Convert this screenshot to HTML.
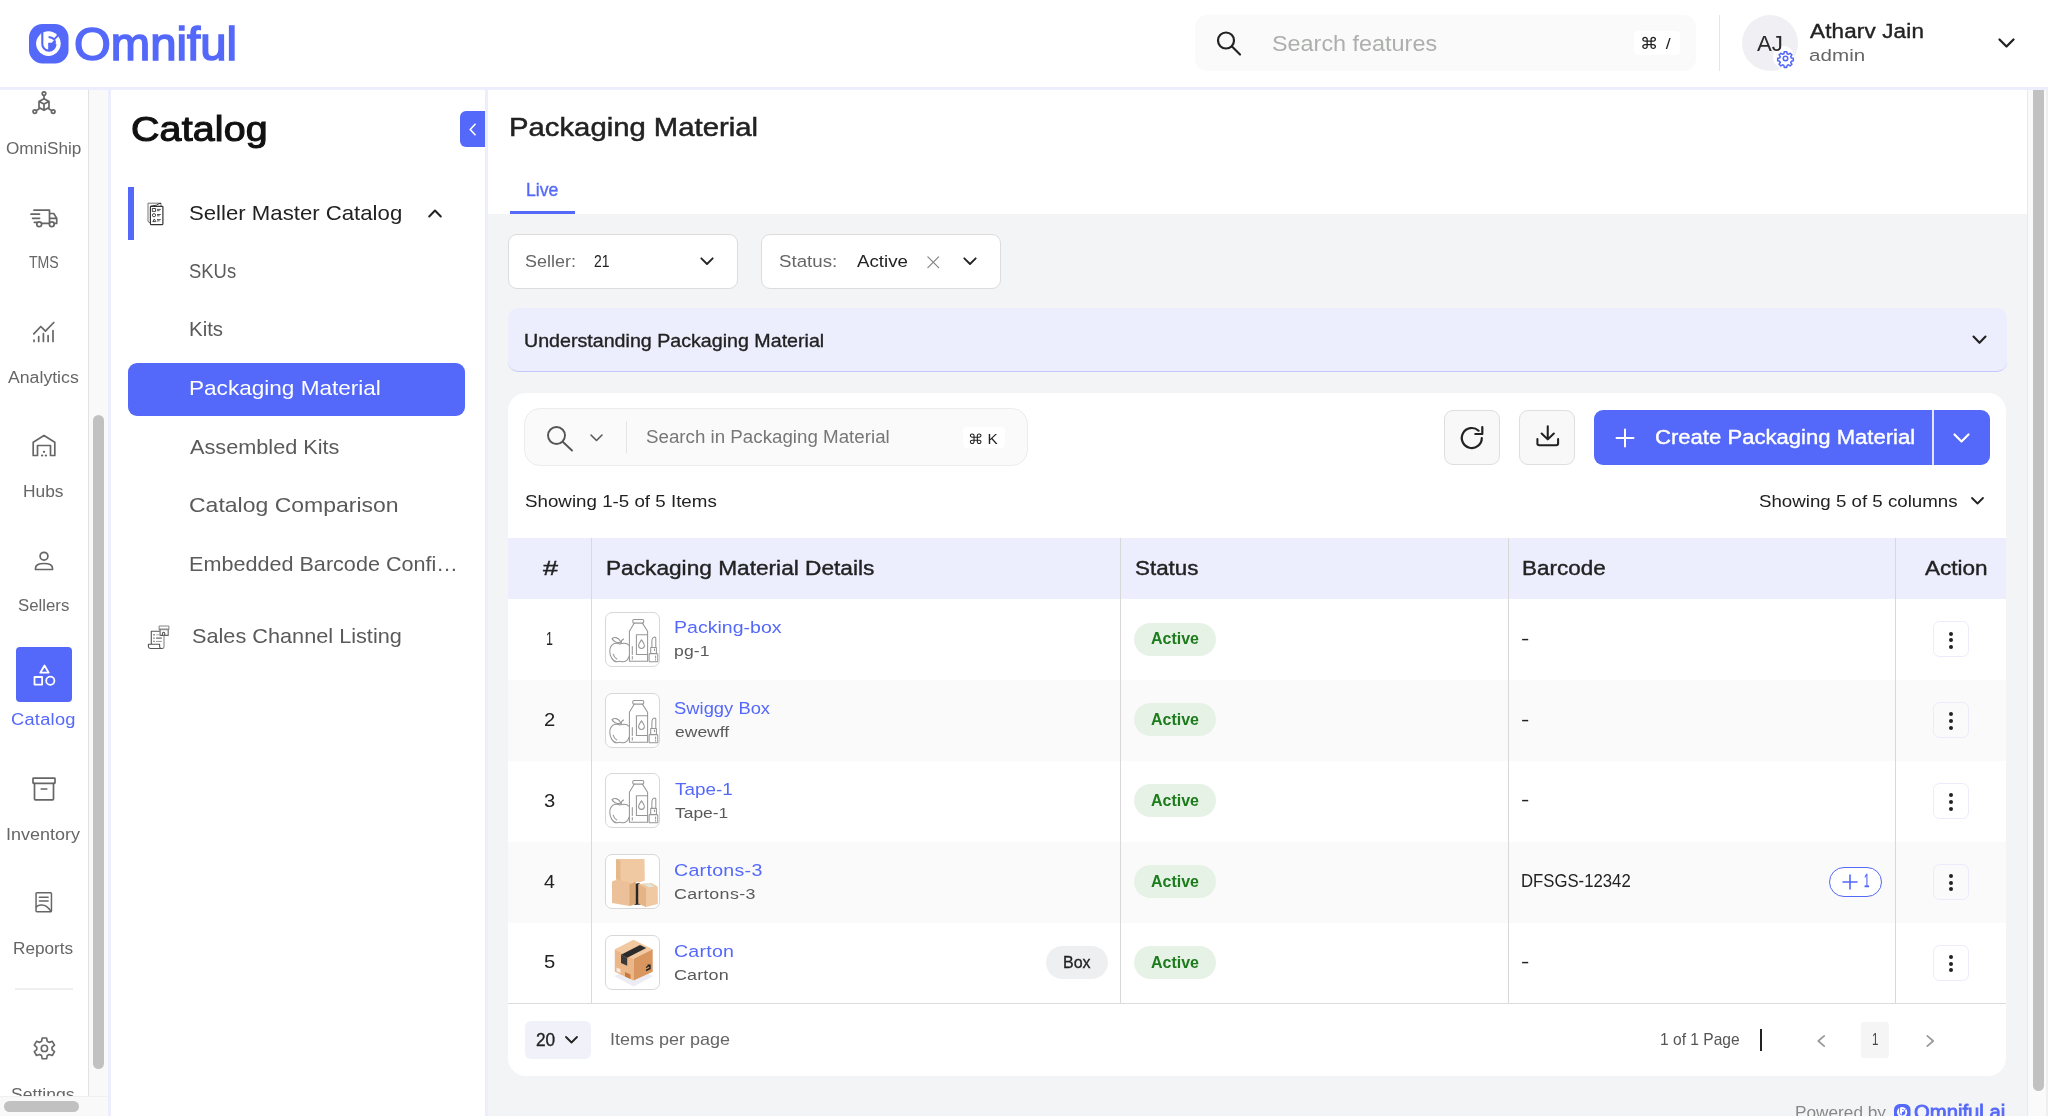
<!DOCTYPE html>
<html lang="en"><head><meta charset="utf-8"><title>Packaging Material - Omniful</title>
<style>
html,body{margin:0;padding:0}
body{width:2048px;height:1116px;position:relative;overflow:hidden;background:#fff;font-family:"Liberation Sans",sans-serif}
.a{position:absolute;box-sizing:border-box}
.t{position:absolute;white-space:pre;line-height:1;transform-origin:0 50%}
svg{position:absolute;overflow:visible}
.ic{fill:none;stroke:#666;stroke-width:1.7;stroke-linecap:round;stroke-linejoin:round}
</style></head><body>
<!-- ===== main backgrounds ===== -->
<div class="a" style="left:488px;top:214px;width:1540px;height:902px;background:#f3f4f6"></div>
<!-- header -->
<div class="a" style="left:0;top:0;width:2048px;height:90px;background:#fff;border-bottom:3px solid #eceefd"></div>
<!-- rail -->
<div class="a" style="left:88px;top:90px;width:1px;height:1006px;background:#e2e2e2"></div>
<div class="a" style="left:89px;top:90px;width:19px;height:1007px;background:#f9f9f9"></div>
<div class="a" style="left:93px;top:415px;width:11px;height:654px;border-radius:6px;background:#c1c1c1"></div>
<div class="a" style="left:0;top:1095.700px;width:108px;height:21px;background:#f9f9f9;border-top:1px solid #f0f0f0"></div>
<div class="a" style="left:4px;top:1101px;width:75px;height:11px;border-radius:6px;background:#c1c1c1"></div>
<div class="a" style="left:108px;top:90px;width:3px;height:1026px;background:#eceefd"></div>
<div class="a" style="left:485px;top:90px;width:3px;height:1026px;background:#eceefd"></div>
<!-- right scrollbar -->
<div class="a" style="left:2027px;top:90px;width:21px;height:1026px;background:#fafafa;border-left:1.5px solid #e9e9e9;border-right:2px solid #efefef"></div>
<div class="a" style="left:2033px;top:90px;width:11px;height:1001px;border-radius:0 0 6px 6px;background:#c1c1c1"></div>

<!-- ===== header items ===== -->
<div class="a" style="left:1195px;top:15px;width:501px;height:56px;border-radius:12px;background:#fafafa"></div>
<div class="a" style="left:1634px;top:31px;width:46px;height:24px;border-radius:4px;background:#fff"></div>
<div class="a" style="left:1719px;top:15px;width:1px;height:56px;background:#e3e5f3"></div>
<div class="a" style="left:1742px;top:15px;width:56px;height:56px;border-radius:50%;background:#f0f0f4"></div>
<!-- logo icon -->
<svg style="left:28.5px;top:24px" width="39.500" height="39.500" viewBox="0 0 39.500 39.500">
<rect x="0" y="0" width="39.500" height="39.500" rx="13.500" fill="#5468fa"/>
<circle cx="19.400" cy="19.600" r="12.300" fill="#fff"/>
<path d="M13.300 8.200V20a6.600 6.600 0 0 0 13.200 0" fill="none" stroke="#5468fa" stroke-width="2.100"/>
<path d="M19.200 18.700h3.600l3.200-3.600q1.500 2.500.5 5.500a6.600 6.600 0 0 1-7.300 5.800z" fill="#5468fa"/>
<path d="M19.600 13q3.400.3 5.600 2.300l4.200-4.300" fill="none" stroke="#5468fa" stroke-width="1.900"/>
</svg>
<!-- search icon -->
<svg style="left:1215px;top:30px" width="28" height="28" viewBox="0 0 28 28" fill="none" stroke="#222" stroke-width="2.2" stroke-linecap="round">
<circle cx="11" cy="10.5" r="8"/><path d="M17 16.5 L25 24.5"/></svg>
<!-- avatar gear badge -->

<div class="a" style="left:1772.800px;top:46px;width:21.700px;height:21.700px;border-radius:50%;background:#fff"></div>
<svg style="left:1777px;top:50px" width="17" height="17" viewBox="0 0 24 24" fill="none" stroke="#5468fa" stroke-width="2.2" stroke-linejoin="round">
<circle cx="12" cy="12" r="3.2"/>
<path d="M10.3 2.5h3.4l.6 2.8 1.9.8 2.4-1.6 2.4 2.4-1.6 2.4.8 1.9 2.8.6v3.4l-2.8.6-.8 1.9 1.6 2.4-2.4 2.4-2.4-1.6-1.9.8-.6 2.8h-3.4l-.6-2.8-1.9-.8-2.4 1.6-2.4-2.4 1.6-2.4-.8-1.9-2.8-.6v-3.4l2.8-.6.8-1.9-1.6-2.4 2.4-2.4 2.4 1.6 1.9-.8z"/>
</svg>
<!-- header chevron -->
<svg style="left:1998px;top:38px" width="17" height="10" viewBox="0 0 17 10" fill="none" stroke="#222" stroke-width="2.3" stroke-linecap="round" stroke-linejoin="round"><path d="M1.5 1.5 L8.5 8.5 L15.5 1.5"/></svg>


<!-- ===== rail ===== -->
<div class="a" style="left:16px;top:647px;width:56px;height:55px;border-radius:4px;background:#5468fa"></div>
<div class="a" style="left:15px;top:988px;width:58px;height:2px;background:#efefef"></div>
<!-- OmniShip -->
<svg class="ic" style="left:32px;top:91px" width="24" height="24" viewBox="0 0 24 24">
<circle cx="12" cy="2.6" r="1.8"/><circle cx="2.8" cy="20.6" r="1.8"/><circle cx="21.2" cy="20.6" r="1.8"/>
<path d="M12 4.5v3.2M4.3 19.6l2.9-1.9M19.7 19.6l-2.9-1.9"/>
<path d="M12 7.7l5 2.7v6l-5 2.8-5-2.8v-6z M7 10.4l5 2.7 5-2.7M12 13.1v6"/>
</svg>
<!-- TMS truck -->
<svg class="ic" style="left:30px;top:209px" width="28" height="19" viewBox="0 0 28 19">
<path d="M4 1.2h15.5v13.2M19.5 4.5h4.2l3 4.6v5.3h-2.2M19.5 9.3h7M1 5.2h8.5M2.6 9.3h7M4.3 13.3h2.2M12 14.4h7"/>
<circle cx="9.2" cy="15.3" r="2.4" fill="#fff"/><circle cx="21.8" cy="15.3" r="2.4" fill="#fff"/>
</svg>
<!-- Analytics -->
<svg class="ic" style="left:32px;top:321px" width="24" height="22" viewBox="0 0 24 22">
<path d="M2 20.5v-1.5M6.7 20.5v-5M11.4 20.5v-8M16.1 20.5v-6M21 20.5v-11"/>
<path d="M1.8 12.8l7-7.3 4.6 4.6L21.8 1.5"/>
</svg>
<!-- Hubs -->
<svg class="ic" style="left:32px;top:434px" width="24" height="23" viewBox="0 0 24 23">
<path d="M1.2 21.5V8.2L12 1.5l10.8 6.7v13.3h-4.3v-10h-13v10z"/>
<path d="M10 21.5h.2M13.8 21.5h.2M11.9 17.8h.2" stroke-width="2.2"/>
</svg>
<!-- Sellers -->
<svg class="ic" style="left:34px;top:551px" width="20" height="20" viewBox="0 0 20 20">
<circle cx="10" cy="5.2" r="3.9"/>
<path d="M1.5 18.5v-1.2c0-3 2.6-4.8 8.5-4.8s8.5 1.8 8.5 4.8v1.2z"/>
</svg>
<!-- Catalog (white) -->
<svg style="left:33px;top:663.6px" width="23" height="23" viewBox="0 0 23 23" fill="none" stroke="#fff" stroke-width="1.8" stroke-linejoin="round">
<path d="M11.5 1.5l4.2 7.2H7.3z"/><rect x="1.5" y="13" width="7.6" height="7.6"/><circle cx="17.3" cy="16.8" r="4.1"/>
</svg>
<!-- Inventory -->
<svg class="ic" style="left:32px;top:777px" width="24" height="24" viewBox="0 0 24 24">
<rect x="1" y="1.2" width="22" height="5.2" rx="0.6"/>
<path d="M2.5 6.4v15.5c0 .5.3.9.9.9h17.2c.6 0 .9-.4.9-.9V6.4M9.3 12h5.4"/>
</svg>
<!-- Reports -->
<svg class="ic" style="left:35.300px;top:890.500px" width="17.500" height="22.500" viewBox="0 0 20 24">
<path d="M1.2 2.2c0-.6.4-1 1-1h15.6c.6 0 1 .4 1 1v19.6c0 .6-.4 1-1 1H2.2c-.6 0-1-.4-1-1z"/>
<path d="M5 6.3h10M5 10.5h10M1.5 17.5c1.5-2.4 8-3.4 11.5-.7s4.5 4.5 5.5 5.7"/>
</svg>
<!-- Settings gear -->
<svg class="ic" style="left:32.500px;top:1037px" width="22.800" height="22.800" viewBox="0 0 24 24" stroke-width="1.900">
<circle cx="12" cy="12" r="3.300"/>
<path d="M9.02 4.47L9.67 1.04L14.33 1.04L14.98 4.47L17.03 5.65L20.32 4.51L22.65 8.54L20.01 10.82L20.01 13.18L22.65 15.46L20.32 19.49L17.03 18.35L14.98 19.53L14.33 22.96L9.67 22.96L9.02 19.53L6.97 18.35L3.68 19.49L1.35 15.46L3.99 13.18L3.99 10.82L1.35 8.54L3.68 4.51L6.97 5.65z"/>
</svg>
<!-- Settings label is clipped by rail bottom -->
<div class="a" style="left:0;top:1080px;width:88px;height:15.700px;overflow:hidden;will-change:transform"><span class="t" style="left:11.300px;top:5px;line-height:19px;font-size:16px;color:#666;transform:scaleX(1.1);transform-origin:0 50%">Settings</span></div>


<!-- ===== sidebar ===== -->
<div class="a" style="left:460px;top:111px;width:25px;height:36px;border-radius:6px 0 0 6px;background:#5468fa"></div>
<div class="a" style="left:128px;top:187px;width:6px;height:53px;background:#5468fa"></div>
<div class="a" style="left:128px;top:363px;width:337px;height:52.500px;border-radius:9px;background:#5468fa"></div>
<!-- collapse chevron -->
<svg style="left:468.800px;top:122.800px" width="7.300" height="13" viewBox="0 0 9 16" fill="none" stroke="#fff" stroke-width="2" stroke-linecap="round" stroke-linejoin="round"><path d="M7.5 1.5L1.5 8l6 6.5"/></svg>
<!-- seller master catalog icon -->
<svg style="left:147px;top:202px" width="17" height="24" viewBox="0 0 17 24" fill="none" stroke-linejoin="round">
<path d="M1 19.600V1.200H14V4" stroke="#666" stroke-width="0.900"/>
<path d="M1 19.600l2.400 1.300" stroke="#666" stroke-width="0.900"/>
<path d="M3.400 4.300L9.500 3.200 12 1.700 14 1.300" stroke="#333" stroke-width="1"/>
<rect x="3.400" y="4.300" width="12.500" height="18.300" rx="0.800" stroke="#333" stroke-width="1.200" fill="#fff"/>
<rect x="5.300" y="6.500" width="3.300" height="2.900" stroke="#333" stroke-width="0.900"/>
<circle cx="7" cy="13.200" r="1.600" stroke="#333" stroke-width="0.900"/>
<path d="M5.800 19.600l1.500-2.600 1.500 2.600z" stroke="#333" stroke-width="0.900"/>
<path d="M10 7.400h3.800M10 8.700h2.600M10 12.500h3.800M10 13.800h2.600M10 17.600h3.800M10 18.900h2.600" stroke="#444" stroke-width="0.900"/>
</svg>
<!-- chevron up -->
<svg style="left:428px;top:209px" width="14" height="9" viewBox="0 0 14 9" fill="none" stroke="#222" stroke-width="2" stroke-linecap="round" stroke-linejoin="round"><path d="M1.2 7.5L7 1.5l5.8 6"/></svg>
<!-- sales channel listing icon -->
<svg style="left:148px;top:625px" width="22" height="24" viewBox="0 0 22 24" fill="none" stroke="#555" stroke-width="1.100" stroke-linejoin="round">
<rect x="11.100" y="1" width="9.800" height="3.700" stroke="#777" stroke-width="0.900"/>
<path d="M11.500 3.900h9" stroke-dasharray="1.200 0.800" stroke-width="0.900"/>
<path d="M12.100 4.700V10.400H20.200V4.700" stroke="#666"/>
<path d="M14.500 10.400V8.300a1.100 1.100 0 0 1 2.200 0V10.400"/>
<path d="M3.300 19.300V6.200H11.800"/>
<path d="M16 10.600V21.800a1.700 1.700 0 0 1-1.700 1.700" stroke="#888"/>
<path d="M3.300 19.300H11.600V21.300a2.200 2.200 0 0 0 2.700 2.200H2.600a2.200 2.200 0 0 1-2.200-2.200V19.300z"/>
<path d="M5.400 9.800h1.200M5.400 13.100h1.200M5.400 16.400h1.200" stroke-width="1.400"/>
<path d="M8.100 9.800h3.400" stroke="#999" stroke-width="0.800"/><path d="M8.100 13.100h5.700"/><path d="M8.100 16.400h5.700" stroke="#888" stroke-width="0.900"/>
</svg>


<!-- ===== main ===== -->
<div class="a" style="left:510px;top:211px;width:65px;height:3px;background:#5468fa"></div>
<div class="a" style="left:507.500px;top:234px;width:230.300px;height:55px;border-radius:9px;background:#fff;border:1.5px solid #dcdcdc"></div>
<div class="a" style="left:761px;top:234px;width:240px;height:55px;border-radius:9px;background:#fff;border:1.5px solid #dcdcdc"></div>
<div class="a" style="left:507.500px;top:308.300px;width:1499.800px;height:63.300px;border-radius:10px;background:#eceefd;border-bottom:1.300px solid #c4c9fb"></div>
<!-- card -->
<div class="a" style="left:508px;top:393px;width:1498px;height:683.300px;border-radius:18px;background:#fff"></div>
<div class="a" style="left:524px;top:408px;width:504px;height:58px;border-radius:16px;background:#fafafa;border:1px solid #ececec"></div>
<div class="a" style="left:626px;top:421px;width:1px;height:32px;background:#e4e4e4"></div>
<div class="a" style="left:963px;top:427px;width:42px;height:21px;border-radius:4px;background:#fff"></div>
<div class="a" style="left:1444px;top:410px;width:56px;height:55px;border-radius:9px;background:#f8f8f8;border:1px solid #dedede"></div>
<div class="a" style="left:1519px;top:410px;width:56px;height:55px;border-radius:9px;background:#f8f8f8;border:1px solid #dedede"></div>
<div class="a" style="left:1594px;top:410px;width:396px;height:55px;border-radius:9px;background:#5468fa"></div>
<div class="a" style="left:1932px;top:410px;width:2px;height:55px;background:#dfe3fd"></div>
<!-- table -->
<div class="a" style="left:508px;top:538px;width:1498px;height:61px;background:#eceefd"></div>
<div class="a" style="left:508px;top:680px;width:1498px;height:81px;background:#fafafa"></div>
<div class="a" style="left:508px;top:841.5px;width:1498px;height:81px;background:#fafafa"></div>
<div class="a" style="left:508px;top:1003px;width:1498px;height:1px;background:#dcdcdc"></div>
<div class="a" style="left:591px;top:538px;width:1px;height:465px;background:#dadada"></div>
<div class="a" style="left:1120.300px;top:538px;width:1.200px;height:465px;background:#d8d8d8"></div>
<div class="a" style="left:1508.300px;top:538px;width:1.200px;height:465px;background:#d8d8d8"></div>
<div class="a" style="left:1895.300px;top:538px;width:1.200px;height:465px;background:#d8d8d8"></div>
<svg style="left:605px;top:611.6px" width="55" height="55" viewBox="0 0 55 55" fill="none" stroke="#969696" stroke-width="1.05" stroke-linejoin="round" stroke-linecap="round">
<rect x="0.5" y="0.5" width="54" height="54" rx="6.5" fill="#fff" stroke="#d8d8d8" stroke-width="1"/>
<rect x="27.8" y="7.4" width="10.9" height="3.7" rx="1.2"/>
<path d="M29.3 11.1L24.4 19.2V49.3H42.6V19.2L37.4 11.1"/>
<path d="M42.2 22.8H31.4V42.5H42.2"/>
<path d="M36.5 27.8c-1.6 2.3-2.9 4-2.9 5.7a2.9 2.9 0 0 0 5.8 0c0-1.7-1.3-3.4-2.9-5.7z"/>
<path d="M27.3 34.5v8M27.3 44.5v2.4"/>
<path d="M14.8 31.9c-1.5-.7-3.6-1-5.4-.3-3.2 1.3-4.6 4.4-4.6 7.6 0 5 3 10.6 7 10.6 1.3 0 2.1-.5 3-.5s1.7.5 3 .5c3 0 5.4-2.6 6.5-6M24.2 33.5c-1.2-1.5-3-2.2-5.2-2.2-1.7 0-3 .4-4.2.6"/>
<path d="M16.2 31.2c-.3-2.2.6-3.4 2.4-4.2M7 26.6c2.2-1.7 6-2 9 3.3-3.6 1.3-6.8.2-9-3.3z"/>
<path d="M8.2 42.2c.6 2.2 1.8 3.8 3.6 4.8"/>
<path d="M44.4 49.8a2 2 0 0 1-.3-1v-6.4c0-.5.4-.8.8-.8h7c.5 0 .9.3.9.8v6.400a2 2 0 0 1-.3 1zM45.7 41.600v-6.200h5.700v6.200M46.900 35.400v-6.500c0-2 1.200-3.600 2.900-3.900.7 0 1 .4 1 1v9.400"/>
<path d="M50.600 44v2M50.600 47.500v.6M49.500 37v1.500"/>
</svg>
<div class="a" style="left:1134px;top:622.5px;width:82px;height:33px;border-radius:17px;background:#e7f2e6"></div>
<div class="a" style="left:1933px;top:621.0px;width:36px;height:36px;border-radius:6.500px;border:1px solid #eaecfc"></div>
<div class="a" style="left:1948.900px;top:631.5px;width:4px;height:4px;border-radius:50%;background:#222"></div>
<div class="a" style="left:1948.900px;top:638.1px;width:4px;height:4px;border-radius:50%;background:#222"></div>
<div class="a" style="left:1948.900px;top:644.7px;width:4px;height:4px;border-radius:50%;background:#222"></div>
<svg style="left:605px;top:692.5px" width="55" height="55" viewBox="0 0 55 55" fill="none" stroke="#969696" stroke-width="1.05" stroke-linejoin="round" stroke-linecap="round">
<rect x="0.5" y="0.5" width="54" height="54" rx="6.5" fill="#fff" stroke="#d8d8d8" stroke-width="1"/>
<rect x="27.8" y="7.4" width="10.9" height="3.7" rx="1.2"/>
<path d="M29.3 11.1L24.4 19.2V49.3H42.6V19.2L37.4 11.1"/>
<path d="M42.2 22.8H31.4V42.5H42.2"/>
<path d="M36.5 27.8c-1.6 2.3-2.9 4-2.9 5.7a2.9 2.9 0 0 0 5.8 0c0-1.7-1.3-3.4-2.9-5.7z"/>
<path d="M27.3 34.5v8M27.3 44.5v2.4"/>
<path d="M14.8 31.9c-1.5-.7-3.6-1-5.4-.3-3.2 1.3-4.6 4.4-4.6 7.6 0 5 3 10.6 7 10.6 1.3 0 2.1-.5 3-.5s1.7.5 3 .5c3 0 5.4-2.6 6.5-6M24.2 33.5c-1.2-1.5-3-2.2-5.2-2.2-1.7 0-3 .4-4.2.6"/>
<path d="M16.2 31.2c-.3-2.2.6-3.4 2.4-4.2M7 26.6c2.2-1.7 6-2 9 3.3-3.6 1.3-6.8.2-9-3.3z"/>
<path d="M8.2 42.2c.6 2.2 1.8 3.8 3.6 4.8"/>
<path d="M44.4 49.8a2 2 0 0 1-.3-1v-6.4c0-.5.4-.8.8-.8h7c.5 0 .9.3.9.8v6.400a2 2 0 0 1-.3 1zM45.7 41.600v-6.200h5.700v6.200M46.900 35.400v-6.500c0-2 1.200-3.600 2.900-3.900.7 0 1 .4 1 1v9.400"/>
<path d="M50.600 44v2M50.600 47.500v.6M49.500 37v1.500"/>
</svg>
<div class="a" style="left:1134px;top:703.4px;width:82px;height:33px;border-radius:17px;background:#e7f2e6"></div>
<div class="a" style="left:1933px;top:701.9px;width:36px;height:36px;border-radius:6.500px;border:1px solid #eaecfc"></div>
<div class="a" style="left:1948.900px;top:712.4px;width:4px;height:4px;border-radius:50%;background:#222"></div>
<div class="a" style="left:1948.900px;top:719.0px;width:4px;height:4px;border-radius:50%;background:#222"></div>
<div class="a" style="left:1948.900px;top:725.6px;width:4px;height:4px;border-radius:50%;background:#222"></div>
<svg style="left:605px;top:773.4px" width="55" height="55" viewBox="0 0 55 55" fill="none" stroke="#969696" stroke-width="1.05" stroke-linejoin="round" stroke-linecap="round">
<rect x="0.5" y="0.5" width="54" height="54" rx="6.5" fill="#fff" stroke="#d8d8d8" stroke-width="1"/>
<rect x="27.8" y="7.4" width="10.9" height="3.7" rx="1.2"/>
<path d="M29.3 11.1L24.4 19.2V49.3H42.6V19.2L37.4 11.1"/>
<path d="M42.2 22.8H31.4V42.5H42.2"/>
<path d="M36.5 27.8c-1.6 2.3-2.9 4-2.9 5.7a2.9 2.9 0 0 0 5.8 0c0-1.7-1.3-3.4-2.9-5.7z"/>
<path d="M27.3 34.5v8M27.3 44.5v2.4"/>
<path d="M14.8 31.9c-1.5-.7-3.6-1-5.4-.3-3.2 1.3-4.6 4.4-4.6 7.6 0 5 3 10.6 7 10.6 1.3 0 2.1-.5 3-.5s1.7.5 3 .5c3 0 5.4-2.6 6.5-6M24.2 33.5c-1.2-1.5-3-2.2-5.2-2.2-1.7 0-3 .4-4.2.6"/>
<path d="M16.2 31.2c-.3-2.2.6-3.4 2.4-4.2M7 26.6c2.2-1.7 6-2 9 3.3-3.6 1.3-6.8.2-9-3.3z"/>
<path d="M8.2 42.2c.6 2.2 1.8 3.8 3.6 4.8"/>
<path d="M44.4 49.8a2 2 0 0 1-.3-1v-6.4c0-.5.4-.8.8-.8h7c.5 0 .9.3.9.8v6.400a2 2 0 0 1-.3 1zM45.7 41.600v-6.200h5.700v6.200M46.900 35.400v-6.500c0-2 1.200-3.600 2.900-3.900.7 0 1 .4 1 1v9.400"/>
<path d="M50.600 44v2M50.600 47.500v.6M49.500 37v1.500"/>
</svg>
<div class="a" style="left:1134px;top:784.3px;width:82px;height:33px;border-radius:17px;background:#e7f2e6"></div>
<div class="a" style="left:1933px;top:782.8px;width:36px;height:36px;border-radius:6.500px;border:1px solid #eaecfc"></div>
<div class="a" style="left:1948.900px;top:793.3px;width:4px;height:4px;border-radius:50%;background:#222"></div>
<div class="a" style="left:1948.900px;top:799.9px;width:4px;height:4px;border-radius:50%;background:#222"></div>
<div class="a" style="left:1948.900px;top:806.5px;width:4px;height:4px;border-radius:50%;background:#222"></div>
<svg style="left:605px;top:854.3px" width="55" height="55" viewBox="0 0 55 55">
<rect x="0.5" y="0.5" width="54" height="54" rx="6.500" fill="#fff" stroke="#d8d8d8" stroke-width="1"/>
<path d="M28 30l6.500-1 1.500 21.500-6.500 .5z" fill="#2a2624"/>
<path d="M11 5l28.500 0 .3 21.500-5 1.800-19.500 0-4.300-3z" fill="#f0c9a2"/>
<path d="M11 5l4.500 1.500 0 21.800-4.500-3z" fill="#e6b98c"/>
<path d="M7 27.500l4-1.500 17 2.500 2.500-1 0 22.500-6 2-17.500-3z" fill="#ecc199"/>
<path d="M24.500 30.500l6-3 0 22.500-6 2z" fill="#dba878"/>
<path d="M33.500 30l13-1 6.300 3.800 0 17.200-11.800 3-7.500-3.500z" fill="#f0c9a2"/>
<path d="M33.500 30l7.500 4 0 19-7.500-3.500z" fill="#e4b485"/>
<path d="M38.500 29.700l6-.5 5 3.300-6 .8z" fill="#dfe6dc"/>
</svg>
<div class="a" style="left:1134px;top:865.2px;width:82px;height:33px;border-radius:17px;background:#e7f2e6"></div>
<div class="a" style="left:1933px;top:863.7px;width:36px;height:36px;border-radius:6.500px;border:1px solid #eaecfc"></div>
<div class="a" style="left:1948.900px;top:874.2px;width:4px;height:4px;border-radius:50%;background:#222"></div>
<div class="a" style="left:1948.900px;top:880.8px;width:4px;height:4px;border-radius:50%;background:#222"></div>
<div class="a" style="left:1948.900px;top:887.4px;width:4px;height:4px;border-radius:50%;background:#222"></div>
<svg style="left:605px;top:935.2px" width="55" height="55" viewBox="0 0 55 55">
<rect x="0.500" y="0.500" width="54" height="54" rx="6.500" fill="#fff" stroke="#d8d8d8" stroke-width="1"/>
<path d="M9 41l19.600 10.500 19.600-10.500-19.600-8z" fill="#ececf4"/>
<path d="M9.800 14.300l18.800-9.500 19.100 9.500-19.100 9.500z" fill="#f2c8a0"/>
<path d="M9.800 14.300l18.800 9.500 0 21.800-18.800-8.800z" fill="#ebb688"/>
<path d="M28.600 23.800l19.100-9.500 0 22.500-19.100 8.800z" fill="#d9965f"/>
<path d="M16 19.800l19-9.800 6.200 3-19 9.800z" fill="#2b2b2b"/>
<path d="M16 19.800l6.200 3 0 8-6.200-2.800z" fill="#3a3a3a"/>
<path d="M11.500 32.500l4 1.800 0 3.800-4-1.800z" fill="#f6ece0"/>
<path d="M20 37l5.500 2.500 0 4.500-5.500-2.500z" fill="#c9783c"/>
<path d="M41 35.500l4-2 0-3.200-2.500 0M44.500 30.500l-3.500 2" stroke="#222" stroke-width="1.400" fill="none"/>
</svg>
<div class="a" style="left:1134px;top:946.1px;width:82px;height:33px;border-radius:17px;background:#e7f2e6"></div>
<div class="a" style="left:1933px;top:944.6px;width:36px;height:36px;border-radius:6.500px;border:1px solid #eaecfc"></div>
<div class="a" style="left:1948.900px;top:955.1px;width:4px;height:4px;border-radius:50%;background:#222"></div>
<div class="a" style="left:1948.900px;top:961.7px;width:4px;height:4px;border-radius:50%;background:#222"></div>
<div class="a" style="left:1948.900px;top:968.3px;width:4px;height:4px;border-radius:50%;background:#222"></div>
<div class="a" style="left:1046px;top:946px;width:62px;height:33px;border-radius:17px;background:#eeeff1"></div>
<div class="a" style="left:1829px;top:867px;width:53px;height:30px;border-radius:15px;border:1.800px solid #5468fa;background:#fff"></div>
<!-- footer -->
<div class="a" style="left:525px;top:1021px;width:66px;height:38px;border-radius:6px;background:#f1f2f9"></div>
<div class="a" style="left:1760px;top:1029px;width:1.600px;height:22px;background:#222"></div>
<div class="a" style="left:1861px;top:1022px;width:28px;height:36px;border-radius:3px;background:#f5f5f5"></div>
<!-- filter chevrons -->
<svg style="left:699.800px;top:257px" width="14" height="8.750" viewBox="0 0 16 10" fill="none" stroke="#222" stroke-width="2.1" stroke-linecap="round" stroke-linejoin="round"><path d="M1.500 1.500L8 8l6.500-6.500"/></svg>
<svg style="left:963px;top:257px" width="14" height="8.750" viewBox="0 0 16 10" fill="none" stroke="#222" stroke-width="2.1" stroke-linecap="round" stroke-linejoin="round"><path d="M1.500 1.500L8 8l6.500-6.500"/></svg>
<svg style="left:927.300px;top:255.800px" width="12.500" height="12.500" viewBox="0 0 14 14" fill="none" stroke="#8a8a8a" stroke-width="1.500" stroke-linecap="round"><path d="M1 1l12 12M13 1L1 13"/></svg>
<!-- banner chevron -->
<svg style="left:1972px;top:335px" width="15" height="10" viewBox="0 0 15 10" fill="none" stroke="#222" stroke-width="2.100" stroke-linecap="round" stroke-linejoin="round"><path d="M1.500 1.500L7.500 7.800l6-6.300"/></svg>
<!-- search icon -->
<svg style="left:546px;top:425px" width="28" height="27" viewBox="0 0 28 27" fill="none" stroke="#555" stroke-width="1.900" stroke-linecap="round"><circle cx="10.500" cy="10.500" r="8.500"/><path d="M17 17l9 8.500"/></svg>
<svg style="left:590px;top:434px" width="13" height="8" viewBox="0 0 13 8" fill="none" stroke="#555" stroke-width="1.500" stroke-linecap="round" stroke-linejoin="round"><path d="M1 1l5.500 5.500L12 1"/></svg>
<!-- refresh -->
<svg style="left:1459px;top:425px" width="26" height="26" viewBox="0 0 26 26" fill="none" stroke="#222" stroke-width="2.200" stroke-linecap="round" stroke-linejoin="round"><path d="M22.800 13a10 10 0 1 1-3.200-7.300"/><path d="M23.300 2v7h-7"/></svg>
<!-- download -->
<svg style="left:1535.500px;top:425px" width="23.500" height="22.500" preserveAspectRatio="none" viewBox="0 0 25 25" fill="none" stroke="#222" stroke-width="2.200" stroke-linecap="round" stroke-linejoin="round"><path d="M12.500 1.500v14M6 9.500l6.500 6.500L19 9.500M1.500 15.500v5c0 1.100.900 2 2 2h18c1.100 0 2-.900 2-2v-5"/></svg>
<!-- plus -->
<svg style="left:1616px;top:429px" width="18" height="18" viewBox="0 0 18 18" fill="none" stroke="#fff" stroke-width="2" stroke-linecap="round"><path d="M9 0.500v17M0.500 9h17"/></svg>
<!-- create chevron -->
<svg style="left:1953px;top:433px" width="17" height="10" viewBox="0 0 17 10" fill="none" stroke="#fff" stroke-width="2.200" stroke-linecap="round" stroke-linejoin="round"><path d="M1.500 1.500l7 7 7-7"/></svg>
<!-- columns chevron -->
<svg style="left:1971px;top:497px" width="13" height="8" viewBox="0 0 13 8" fill="none" stroke="#222" stroke-width="1.800" stroke-linecap="round" stroke-linejoin="round"><path d="M1 1l5.500 5.500L12 1"/></svg>
<!-- +1 plus -->
<svg style="left:1842px;top:874px" width="16" height="16" viewBox="0 0 16 16" fill="none" stroke="#5468fa" stroke-width="1.600" stroke-linecap="round"><path d="M8 1v14M1 8h14"/></svg>
<!-- page size chevron -->
<svg style="left:565px;top:1036px" width="13" height="8" viewBox="0 0 13 8" fill="none" stroke="#222" stroke-width="1.800" stroke-linecap="round" stroke-linejoin="round"><path d="M1 1l5.500 5.500L12 1"/></svg>
<!-- pager chevrons -->
<svg style="left:1817px;top:1034.800px" width="8.500" height="12" viewBox="0 0 10 14" fill="none" stroke="#999" stroke-width="2" stroke-linecap="round" stroke-linejoin="round"><path d="M8.500 1L1.500 7l7 6"/></svg>
<svg style="left:1925.600px;top:1034.800px" width="8.500" height="12" viewBox="0 0 10 14" fill="none" stroke="#999" stroke-width="2" stroke-linecap="round" stroke-linejoin="round"><path d="M1.500 1l7 6-7 6"/></svg>
<!-- powered-by logo -->
<svg style="left:1894px;top:1104px" width="16.500" height="16.500" viewBox="0 0 39.500 39.500"><rect x="0" y="0" width="39.500" height="39.500" rx="13.500" fill="#5468fa"/><circle cx="19.400" cy="19.600" r="12.300" fill="#fff"/><path d="M13.300 8.200V20a6.600 6.600 0 0 0 13.200 0" fill="none" stroke="#5468fa" stroke-width="2.100"/><path d="M19.200 18.700h3.600l3.200-3.600q1.500 2.500.5 5.500a6.600 6.600 0 0 1-7.300 5.800z" fill="#5468fa"/><path d="M19.600 13q3.400.3 5.600 2.300l4.200-4.300" fill="none" stroke="#5468fa" stroke-width="1.900"/></svg>


<div class="a" style="left:0;top:0;width:2048px;height:1116px;will-change:transform">
<span class="t" style="left:74.2px;top:16px;color:#5468fa;line-height:56px;font-size:46.5px;font-weight:400;transform:scaleX(1.0178);-webkit-text-stroke:1.6px #5468fa;">Omniful</span>
<span class="t" style="left:1272.4px;top:31px;color:#adafad;line-height:26px;font-size:21.3px;font-weight:400;transform:scaleX(1.0980);">Search features</span>
<span class="t" style="left:1639.5px;top:34px;color:#222;line-height:19px;font-size:15.5px;font-weight:400;transform:scaleX(1.1400);letter-spacing:1.09px;">⌘ /</span>
<span class="t" style="left:1757.4px;top:31px;color:#2a2a2a;line-height:26px;font-size:21.7px;font-weight:400;transform:scaleX(1.0250);">AJ</span>
<span class="t" style="left:1809.7px;top:19px;color:#222;line-height:24px;font-size:19.7px;font-weight:400;transform:scaleX(1.1400);letter-spacing:0.14px;-webkit-text-stroke:0.37px #222;">Atharv Jain</span>
<span class="t" style="left:1808.7px;top:45px;color:#666;line-height:21px;font-size:17.4px;font-weight:400;transform:scaleX(1.1817);letter-spacing:0.07px;">admin</span>
<span class="t" style="left:6.2px;top:139px;color:#666666;line-height:19px;font-size:16px;font-weight:400;transform:scaleX(1.0714);">OmniShip</span>
<span class="t" style="left:29.4px;top:253px;color:#666666;line-height:19px;font-size:16px;font-weight:400;transform:scaleX(0.8818);">TMS</span>
<span class="t" style="left:8.3px;top:368px;color:#666666;line-height:19px;font-size:16px;font-weight:400;transform:scaleX(1.1047);">Analytics</span>
<span class="t" style="left:23.0px;top:482px;color:#666666;line-height:19px;font-size:16px;font-weight:400;transform:scaleX(1.0833);">Hubs</span>
<span class="t" style="left:17.8px;top:596px;color:#666666;line-height:19px;font-size:16px;font-weight:400;transform:scaleX(1.0502);">Sellers</span>
<span class="t" style="left:11.4px;top:710px;color:#5468fa;line-height:19px;font-size:16px;font-weight:400;transform:scaleX(1.1400);letter-spacing:0.23px;">Catalog</span>
<span class="t" style="left:6.0px;top:825px;color:#666666;line-height:19px;font-size:16px;font-weight:400;transform:scaleX(1.1231);">Inventory</span>
<span class="t" style="left:13.2px;top:939px;color:#666666;line-height:19px;font-size:16px;font-weight:400;transform:scaleX(1.0745);">Reports</span>
<span class="t" style="left:131.3px;top:108px;color:#111;line-height:42px;font-size:34.7px;font-weight:400;transform:scaleX(1.1349);letter-spacing:0.15px;-webkit-text-stroke:1.100px #111;">Catalog</span>
<span class="t" style="left:189.3px;top:201px;color:#222;line-height:24px;font-size:20.2px;font-weight:400;transform:scaleX(1.0984);">Seller Master Catalog</span>
<span class="t" style="left:189.3px;top:259px;color:#5a5a5a;line-height:24px;font-size:20.2px;font-weight:400;transform:scaleX(0.9140);">SKUs</span>
<span class="t" style="left:189.3px;top:317px;color:#5a5a5a;line-height:24px;font-size:20.2px;font-weight:400;transform:scaleX(1.0131);">Kits</span>
<span class="t" style="left:189.3px;top:376px;color:#fff;line-height:24px;font-size:20.2px;font-weight:400;transform:scaleX(1.1176);">Packaging Material</span>
<span class="t" style="left:190.3px;top:435px;color:#5a5a5a;line-height:24px;font-size:20.2px;font-weight:400;transform:scaleX(1.0741);">Assembled Kits</span>
<span class="t" style="left:189.3px;top:493px;color:#5a5a5a;line-height:24px;font-size:20.2px;font-weight:400;transform:scaleX(1.1390);">Catalog Comparison</span>
<span class="t" style="left:189.3px;top:552px;color:#5a5a5a;line-height:24px;font-size:20.2px;font-weight:400;transform:scaleX(1.0698);">Embedded Barcode Confi…</span>
<span class="t" style="left:192.2px;top:624px;color:#5a5a5a;line-height:24px;font-size:20.2px;font-weight:400;transform:scaleX(1.0746);">Sales Channel Listing</span>
<span class="t" style="left:509.2px;top:112px;color:#222;line-height:31px;font-size:25.8px;font-weight:400;transform:scaleX(1.1350);-webkit-text-stroke:0.49px #222;">Packaging Material</span>
<span class="t" style="left:526.3px;top:180px;color:#5468fa;line-height:21px;font-size:17.8px;font-weight:400;transform:scaleX(0.9935);-webkit-text-stroke:0.34px #5468fa;">Live</span>
<span class="t" style="left:525.0px;top:251px;color:#666;line-height:21px;font-size:17.4px;font-weight:400;transform:scaleX(1.0319);">Seller:</span>
<span class="t" style="left:594.4px;top:251px;color:#222;line-height:21px;font-size:17.4px;font-weight:400;transform:scaleX(0.8000);">21</span>
<span class="t" style="left:778.5px;top:251px;color:#666;line-height:21px;font-size:17.4px;font-weight:400;transform:scaleX(1.0750);">Status:</span>
<span class="t" style="left:857.0px;top:251px;color:#222;line-height:21px;font-size:17.4px;font-weight:400;transform:scaleX(1.0745);">Active</span>
<span class="t" style="left:523.6px;top:331px;color:#222;line-height:21px;font-size:17.8px;font-weight:400;transform:scaleX(1.1044);-webkit-text-stroke:0.34px #222;">Understanding Packaging Material</span>
<span class="t" style="left:646.3px;top:427px;color:#777;line-height:21px;font-size:17.5px;font-weight:400;transform:scaleX(1.0708);">Search in Packaging Material</span>
<span class="t" style="left:968.0px;top:431px;color:#222;line-height:17px;font-size:14px;font-weight:400;transform:scaleX(1.0962);">⌘ K</span>
<span class="t" style="left:1655.4px;top:425px;color:#fff;line-height:24px;font-size:20px;font-weight:400;transform:scaleX(1.1039);-webkit-text-stroke:0.38px #fff;">Create Packaging Material</span>
<span class="t" style="left:525.2px;top:492px;color:#222;line-height:20px;font-size:17.0px;font-weight:400;transform:scaleX(1.1029);">Showing 1-5 of 5 Items</span>
<span class="t" style="left:1758.6px;top:492px;color:#222;line-height:20px;font-size:17.0px;font-weight:400;transform:scaleX(1.1000);">Showing 5 of 5 columns</span>
<span class="t" style="left:542.6px;top:556px;color:#222;line-height:24px;font-size:19.9px;font-weight:400;transform:scaleX(1.3587);-webkit-text-stroke:0.38px #222;">#</span>
<span class="t" style="left:605.6px;top:556px;color:#222;line-height:24px;font-size:19.9px;font-weight:400;transform:scaleX(1.1397);-webkit-text-stroke:0.38px #222;">Packaging Material Details</span>
<span class="t" style="left:1135.4px;top:556px;color:#222;line-height:24px;font-size:19.9px;font-weight:400;transform:scaleX(1.1253);-webkit-text-stroke:0.38px #222;">Status</span>
<span class="t" style="left:1522.4px;top:556px;color:#222;line-height:24px;font-size:19.9px;font-weight:400;transform:scaleX(1.1288);-webkit-text-stroke:0.38px #222;">Barcode</span>
<span class="t" style="left:1925.0px;top:556px;color:#222;line-height:24px;font-size:19.9px;font-weight:400;transform:scaleX(1.1327);-webkit-text-stroke:0.38px #222;">Action</span>
<span class="t" style="left:545.7px;top:629px;color:#222;line-height:21px;font-size:17.8px;font-weight:400;transform:scaleX(0.7000);">1</span>
<span class="t" style="left:673.9px;top:617px;color:#5468fa;line-height:21px;font-size:17.2px;font-weight:400;transform:scaleX(1.1336);letter-spacing:0.03px;">Packing-box</span>
<span class="t" style="left:673.9px;top:642px;color:#5a5a5a;line-height:18px;font-size:15.4px;font-weight:400;transform:scaleX(1.1400);letter-spacing:0.13px;">pg-1</span>
<span class="t" style="left:1151.4px;top:629px;color:#1c7c1c;line-height:19px;font-size:15.7px;font-weight:700;transform:scaleX(1.0191);">Active</span>
<span class="t" style="left:1521.0px;top:629px;color:#222;line-height:21px;font-size:17.5px;font-weight:400;transform:scaleX(1.4292);">-</span>
<span class="t" style="left:543.5px;top:710px;color:#222;line-height:21px;font-size:17.8px;font-weight:400;transform:scaleX(1.1364);">2</span>
<span class="t" style="left:673.9px;top:698px;color:#5468fa;line-height:21px;font-size:17.2px;font-weight:400;transform:scaleX(1.0697);">Swiggy Box</span>
<span class="t" style="left:674.9px;top:723px;color:#5a5a5a;line-height:18px;font-size:15.4px;font-weight:400;transform:scaleX(1.1375);">ewewff</span>
<span class="t" style="left:1151.4px;top:710px;color:#1c7c1c;line-height:19px;font-size:15.7px;font-weight:700;transform:scaleX(1.0191);">Active</span>
<span class="t" style="left:1521.0px;top:710px;color:#222;line-height:21px;font-size:17.5px;font-weight:400;transform:scaleX(1.4292);">-</span>
<span class="t" style="left:543.5px;top:791px;color:#222;line-height:21px;font-size:17.8px;font-weight:400;transform:scaleX(1.1364);">3</span>
<span class="t" style="left:674.9px;top:779px;color:#5468fa;line-height:21px;font-size:17.2px;font-weight:400;transform:scaleX(1.0981);">Tape-1</span>
<span class="t" style="left:674.9px;top:804px;color:#5a5a5a;line-height:18px;font-size:15.4px;font-weight:400;transform:scaleX(1.1321);">Tape-1</span>
<span class="t" style="left:1151.4px;top:791px;color:#1c7c1c;line-height:19px;font-size:15.7px;font-weight:700;transform:scaleX(1.0191);">Active</span>
<span class="t" style="left:1521.0px;top:790px;color:#222;line-height:21px;font-size:17.5px;font-weight:400;transform:scaleX(1.4292);">-</span>
<span class="t" style="left:544.0px;top:872px;color:#222;line-height:21px;font-size:17.8px;font-weight:400;transform:scaleX(1.1000);">4</span>
<span class="t" style="left:673.9px;top:860px;color:#5468fa;line-height:21px;font-size:17.2px;font-weight:400;transform:scaleX(1.1400);letter-spacing:0.25px;">Cartons-3</span>
<span class="t" style="left:673.9px;top:885px;color:#5a5a5a;line-height:18px;font-size:15.4px;font-weight:400;transform:scaleX(1.1574);letter-spacing:0.35px;">Cartons-3</span>
<span class="t" style="left:1151.4px;top:872px;color:#1c7c1c;line-height:19px;font-size:15.7px;font-weight:700;transform:scaleX(1.0191);">Active</span>
<span class="t" style="left:543.5px;top:952px;color:#222;line-height:21px;font-size:17.8px;font-weight:400;transform:scaleX(1.1364);">5</span>
<span class="t" style="left:673.9px;top:941px;color:#5468fa;line-height:21px;font-size:17.2px;font-weight:400;transform:scaleX(1.1400);letter-spacing:0.19px;">Carton</span>
<span class="t" style="left:673.9px;top:966px;color:#5a5a5a;line-height:18px;font-size:15.4px;font-weight:400;transform:scaleX(1.1672);letter-spacing:0.12px;">Carton</span>
<span class="t" style="left:1151.4px;top:953px;color:#1c7c1c;line-height:19px;font-size:15.7px;font-weight:700;transform:scaleX(1.0191);">Active</span>
<span class="t" style="left:1521.0px;top:952px;color:#222;line-height:21px;font-size:17.5px;font-weight:400;transform:scaleX(1.4292);">-</span>
<span class="t" style="left:1521.0px;top:871px;color:#222;line-height:21px;font-size:17.5px;font-weight:400;transform:scaleX(0.9558);">DFSGS-12342</span>
<span class="t" style="left:1863.8px;top:871px;color:#5468fa;line-height:21px;font-size:17.5px;font-weight:400;transform:scaleX(0.5600);-webkit-text-stroke:0.33px #5468fa;">1</span>
<span class="t" style="left:1062.6px;top:952px;color:#222;line-height:20px;font-size:16.5px;font-weight:400;transform:scaleX(0.9679);-webkit-text-stroke:0.31px #222;">Box</span>
<span class="t" style="left:535.7px;top:1030px;color:#222;line-height:21px;font-size:17.8px;font-weight:400;transform:scaleX(0.9714);-webkit-text-stroke:0.34px #222;">20</span>
<span class="t" style="left:609.5px;top:1029px;color:#666;line-height:20px;font-size:16.5px;font-weight:400;transform:scaleX(1.0908);">Items per page</span>
<span class="t" style="left:1660.3px;top:1029px;color:#555;line-height:20px;font-size:16.5px;font-weight:400;transform:scaleX(0.9434);">1 of 1 Page</span>
<span class="t" style="left:1872.2px;top:1029px;color:#444;line-height:20px;font-size:16.5px;font-weight:400;transform:scaleX(0.7000);">1</span>
<span class="t" style="left:1794.7px;top:1102px;color:#888;line-height:21px;font-size:17.4px;font-weight:400;transform:scaleX(0.9901);">Powered by</span>
<span class="t" style="left:1913.5px;top:1101px;color:#5468fa;line-height:23px;font-size:19.4px;font-weight:400;transform:scaleX(1.0460);-webkit-text-stroke:0.8px #5468fa;">Omniful.ai</span>
</div>
</body></html>
